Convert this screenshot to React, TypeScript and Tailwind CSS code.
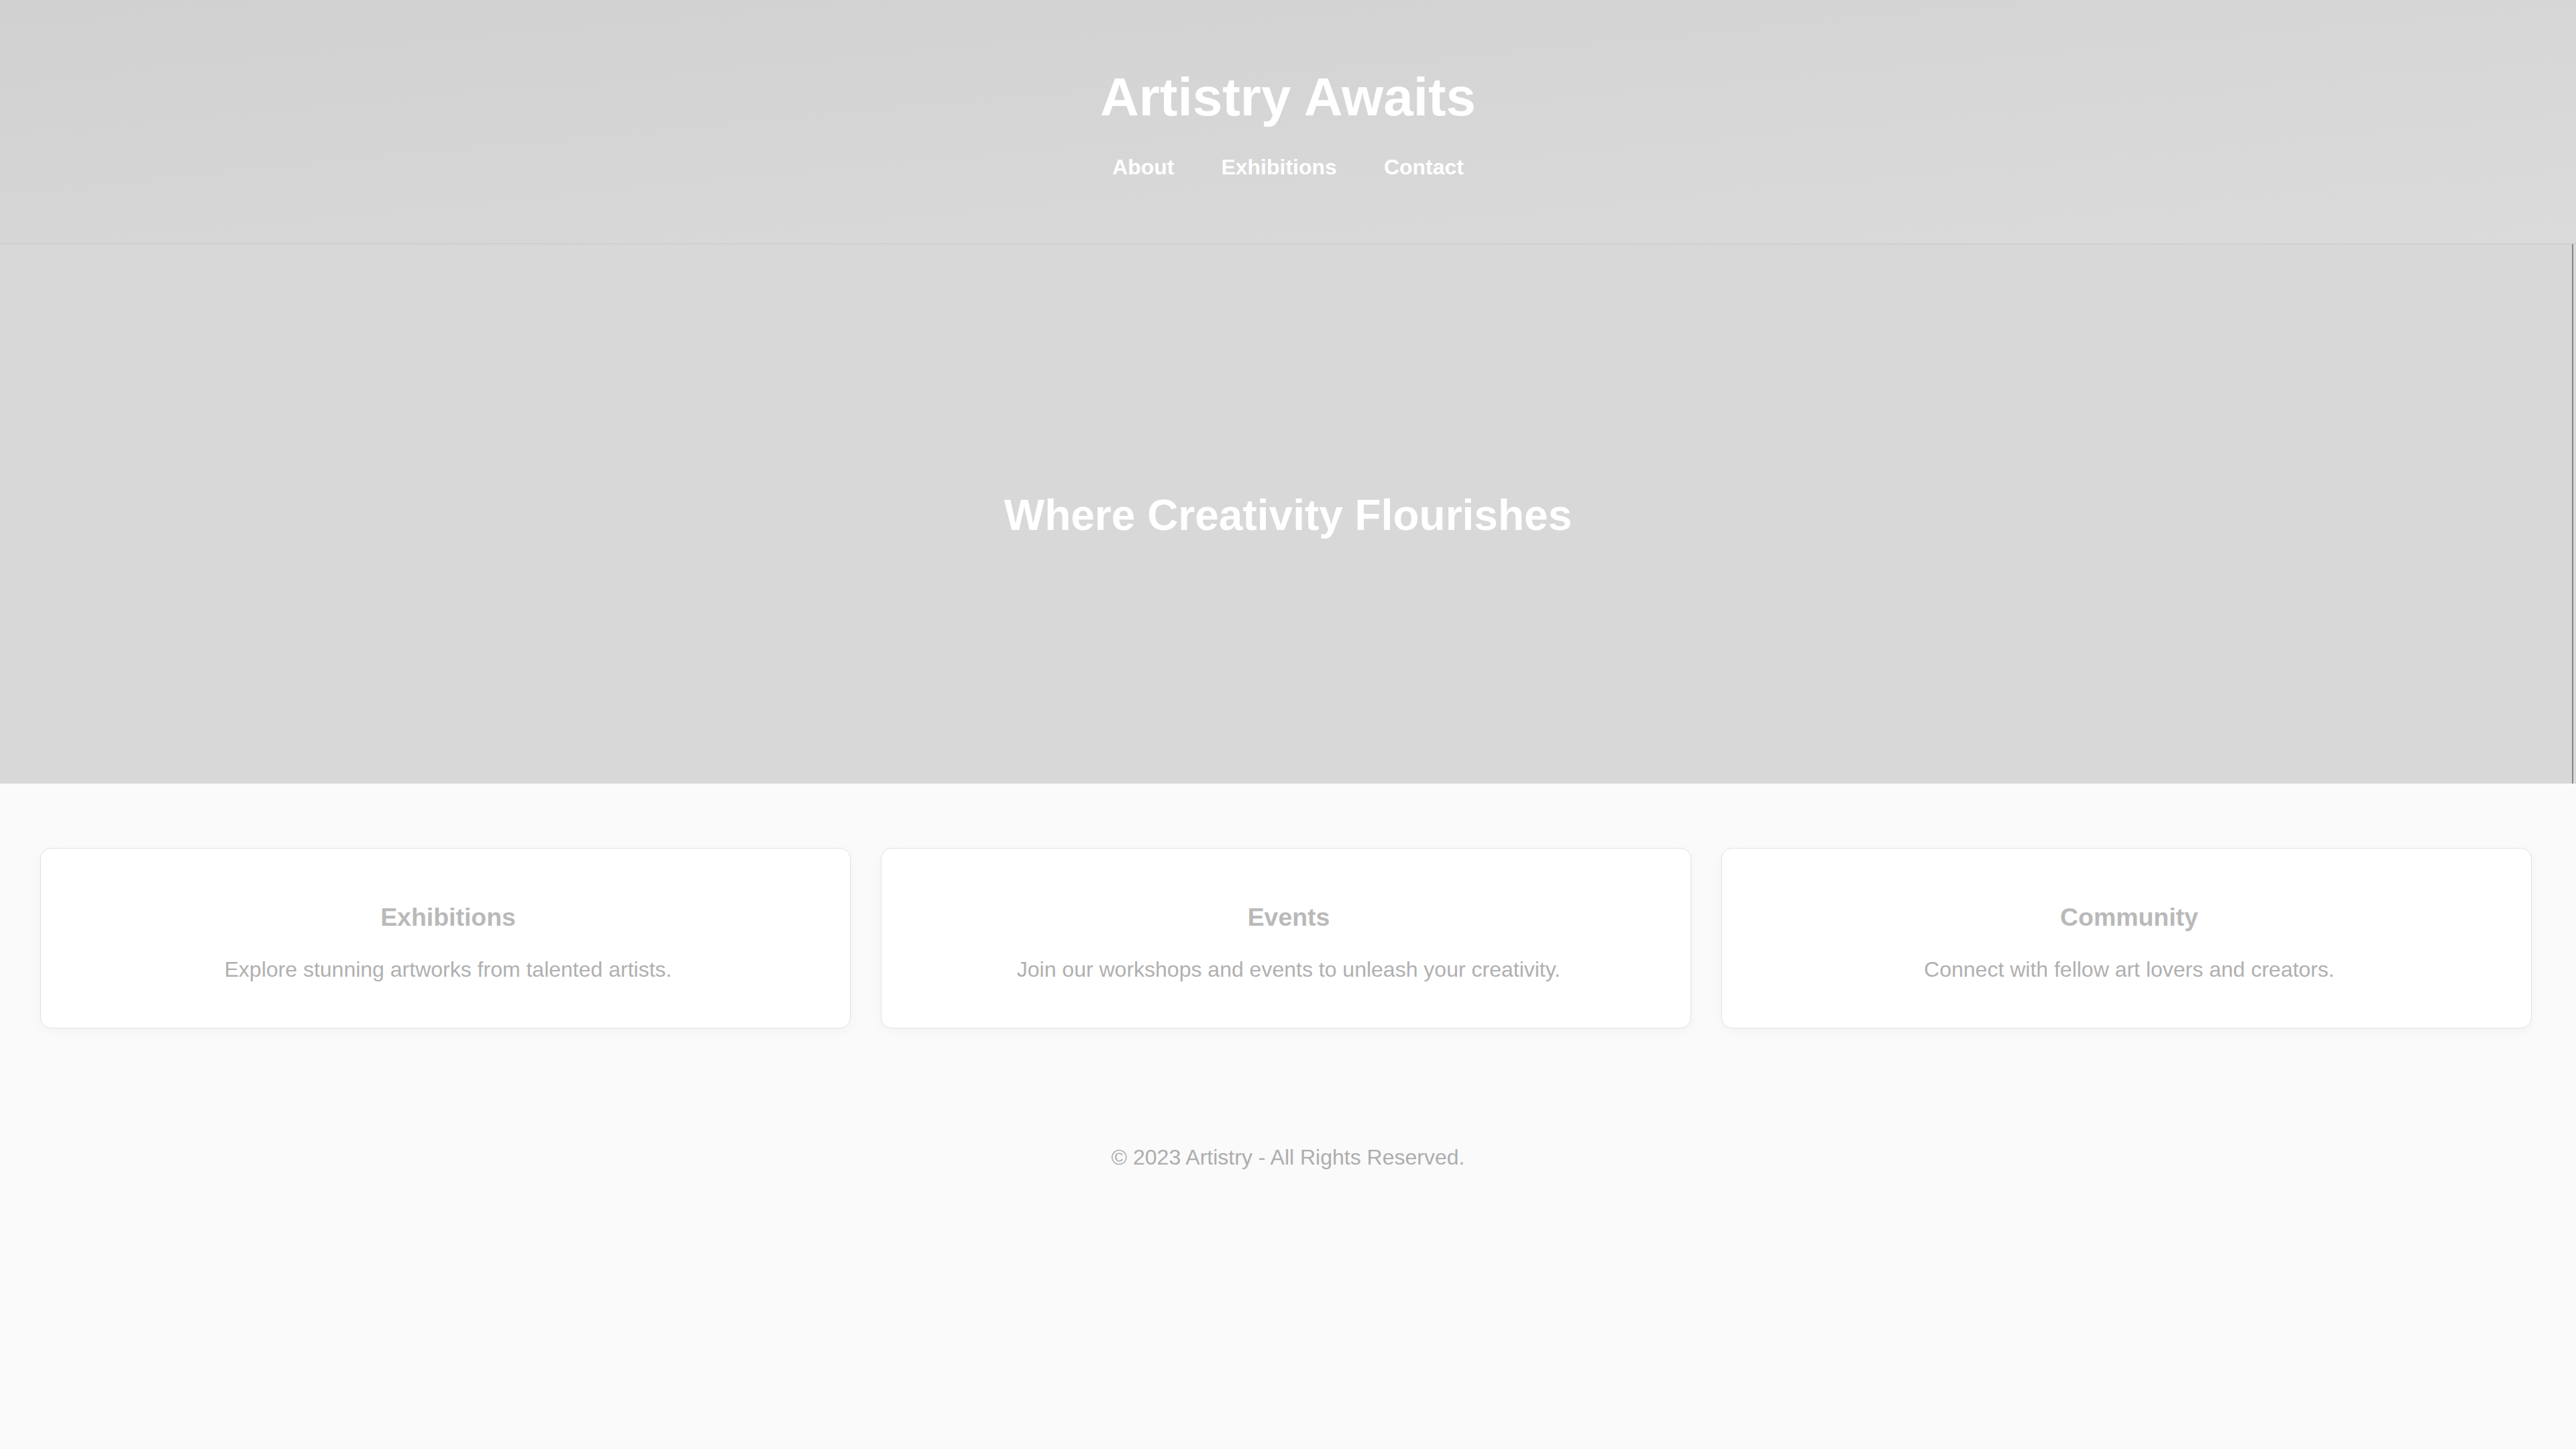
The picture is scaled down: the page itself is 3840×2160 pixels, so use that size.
import React from "react";

const cards = [
  { title: "Exhibitions", text: "Explore stunning artworks from talented artists." },
  { title: "Events", text: "Join our workshops and events to unleash your creativity." },
  { title: "Community", text: "Connect with fellow art lovers and creators." },
];

export default function App() {
  return (
    <div
      className="min-h-screen w-full bg-[#fafafa] flex flex-col"
      style={{ fontFamily: '"Liberation Sans", Arial, Helvetica, sans-serif' }}
    >
      <header className="h-[364px] bg-gradient-to-br from-[#d1d1d1] to-[#dbdbdb] border-b border-[#c6c6c6] flex flex-col items-center pt-[99px]">
        <h1 className="text-[80px] leading-[92px] font-bold text-white m-0">Artistry Awaits</h1>
        <nav className="mt-[40px] flex gap-[70px]">
          {["About", "Exhibitions", "Contact"].map((l) => (
            <a key={l} className="text-[32px] leading-[37px] font-bold text-white no-underline">
              {l}
            </a>
          ))}
        </nav>
      </header>

      <section className="h-[804px] bg-[#d8d8d8] flex">
        <div className="flex-1 flex items-center justify-center pt-[4px]">
          <h2 className="text-[64px] leading-[74px] font-bold text-white pl-[6px]">Where Creativity Flourishes</h2>
        </div>
        <div className="w-[2px] bg-[#858585]" />
        <div className="w-[4px] bg-[#dadada]" />
      </section>

      <main className="pt-[96px] pl-[60px] pr-[66px] grid grid-cols-3 gap-[45px]">
        {cards.map((c) => (
          <div
            key={c.title}
            className="bg-white border border-[#e2e2e2] rounded-[16px] shadow-[0_4px_16px_rgba(0,0,0,0.035)] pl-[44px] pr-[36px] pt-[44px] pb-[36px] text-center"
          >
            <h3 className="text-[37.44px] leading-[43px] font-bold text-[#b9b9b9] my-[37.44px]">{c.title}</h3>
            <p className="text-[32px] leading-[37px] text-[#b0b0b0] my-[32px]">{c.text}</p>
          </div>
        ))}
      </main>

      <footer className="pt-[174px] flex justify-center">
        <p className="text-[32px] leading-[37px] text-[#adadad]">© 2023 Artistry - All Rights Reserved.</p>
      </footer>
    </div>
  );
}
